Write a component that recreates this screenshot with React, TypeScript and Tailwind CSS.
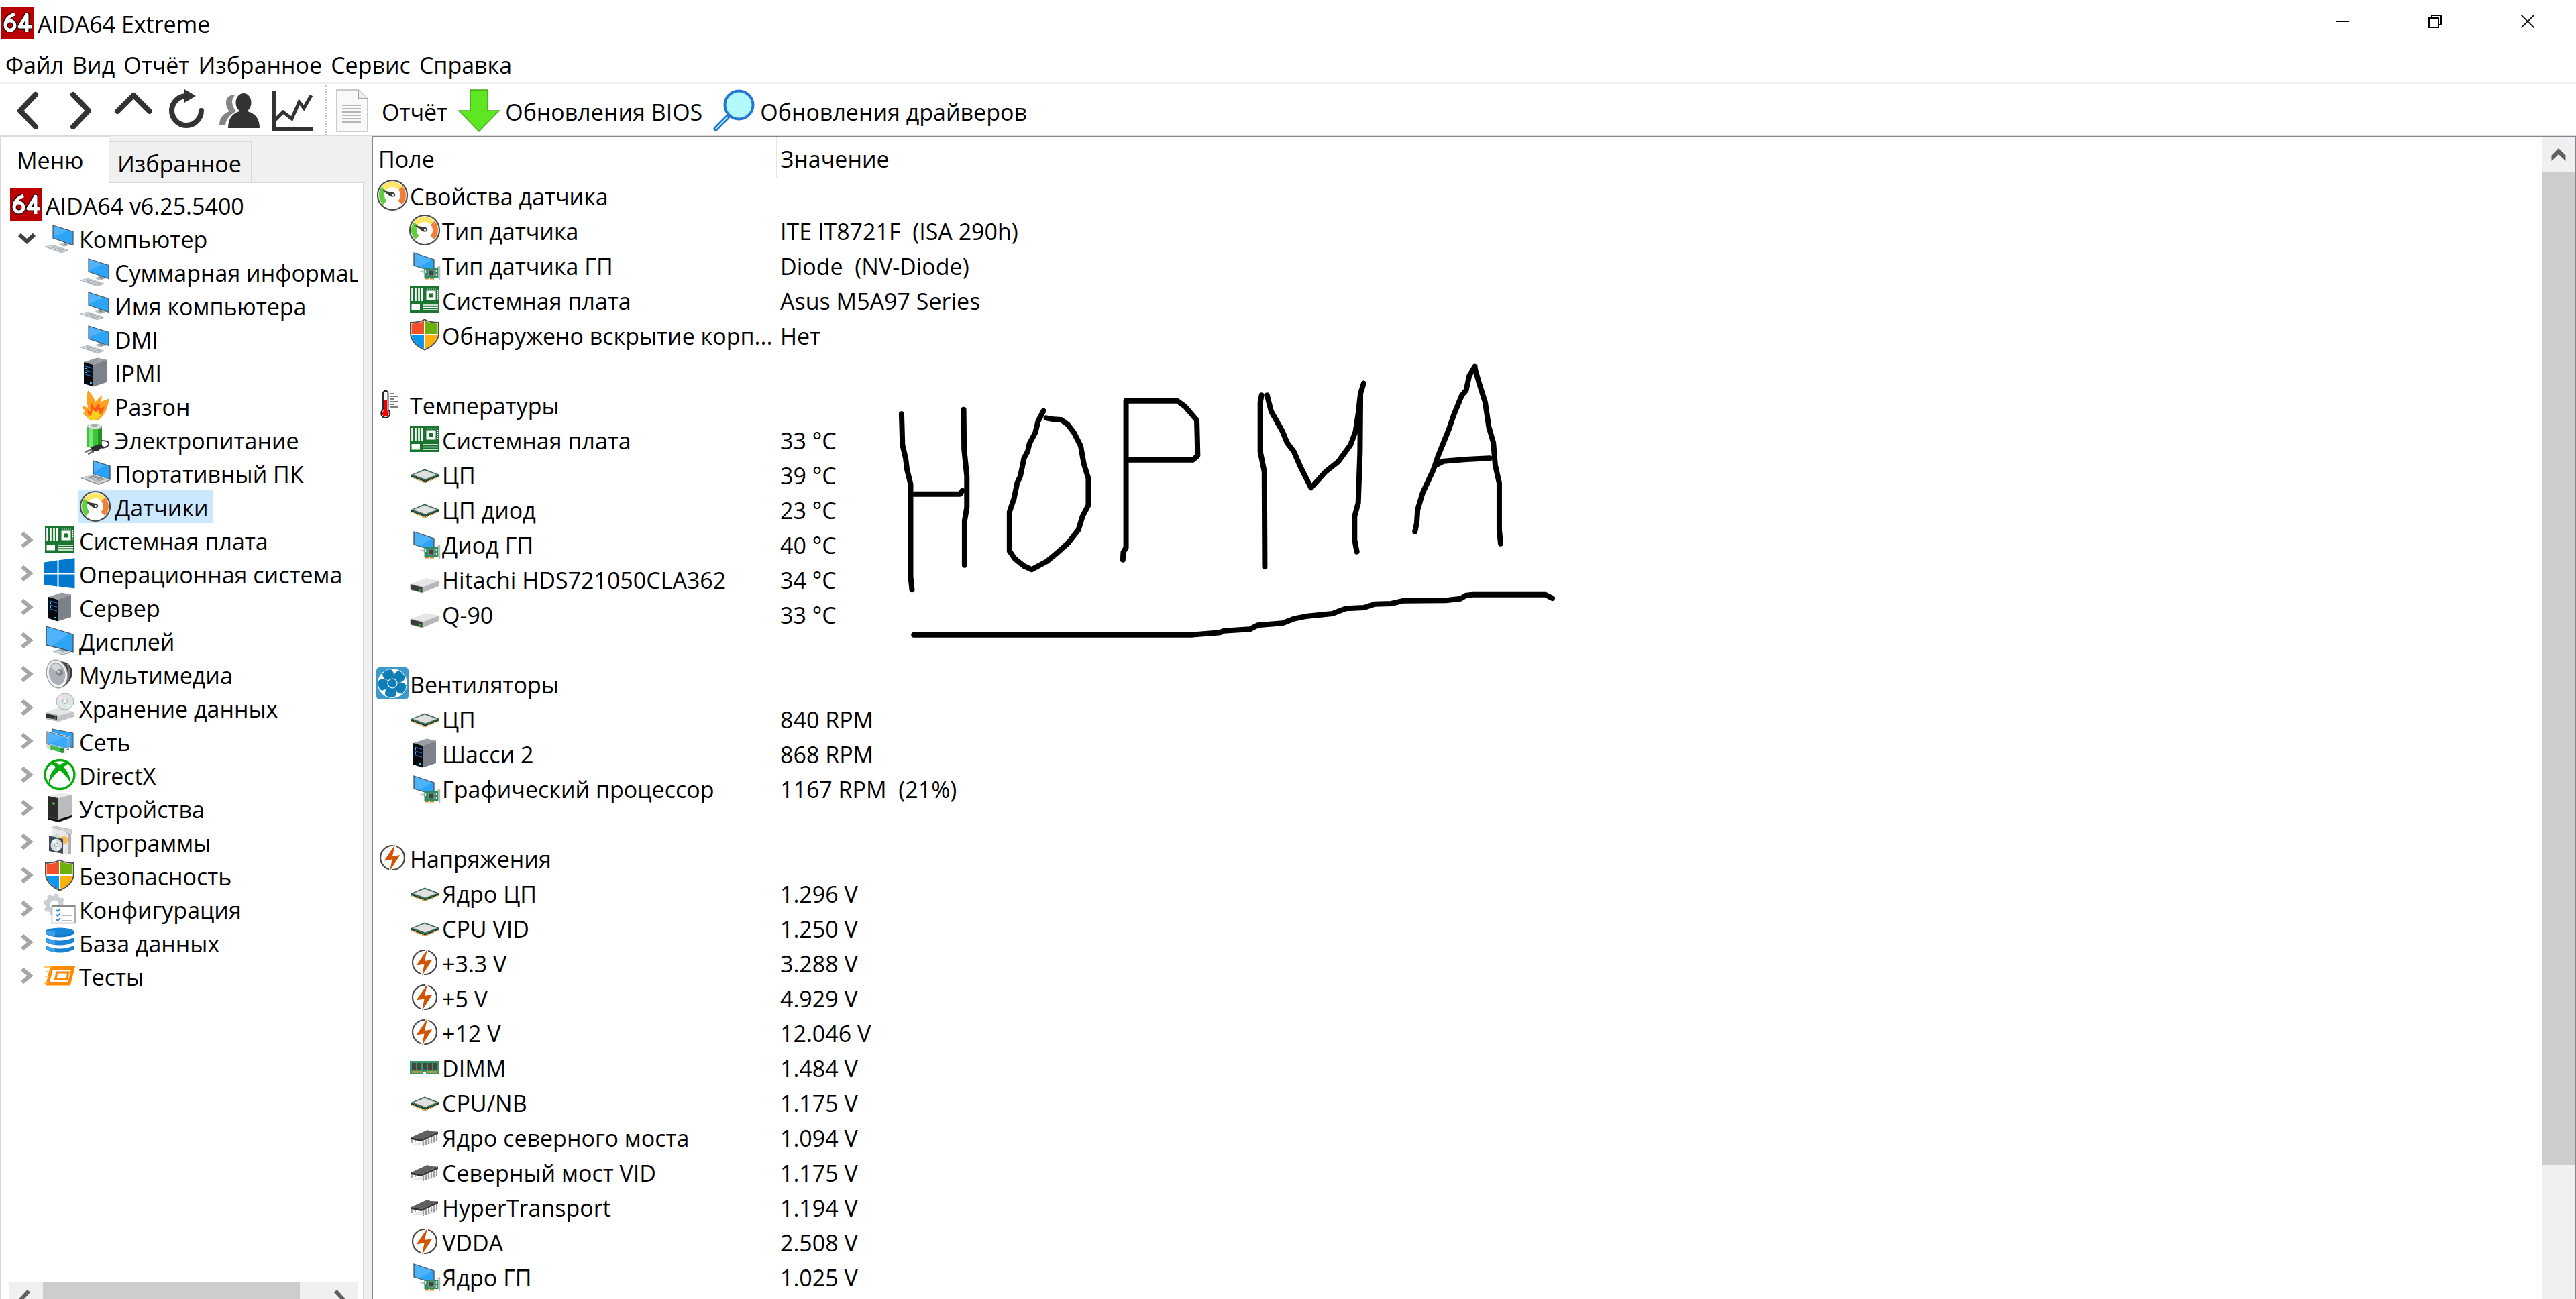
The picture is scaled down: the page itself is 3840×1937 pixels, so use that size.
import React from "react";

type IconName =
  | "aida" | "computer" | "server" | "fire" | "battery" | "laptop" | "gauge" | "board" | "windows"
  | "display" | "speaker" | "storage" | "network" | "xbox" | "tower" | "box" | "shield" | "config"
  | "database" | "tests" | "gpu" | "thermo" | "cpu" | "hdd" | "fan" | "bolt" | "dimm" | "chip";

const icons: Record<IconName, React.ReactNode> = {
  aida: (
    <>
      <rect width="48" height="48" fill="#ba0000" />
      <g fill="none" strokeLinejoin="round" strokeLinecap="butt">
        <g stroke="#1c0000" strokeWidth="7.5">
          <path d="M19 11 Q6 16 6 28 A7 7 0 1 0 13 21 Q8 21 6 27" />
          <path d="M38 37 V12 L27 30 H45" />
        </g>
        <g stroke="#fff" strokeWidth="5">
          <path d="M20 11 Q6 16 6 28 A7 7 0 1 0 13 21 Q8 21 6 27" />
          <path d="M38 38 V12 L27 30 H45" />
        </g>
      </g>
    </>
  ),
  computer: (
    <>
      <path d="M23 33 L34 31 L41 34 L30 37Z" fill="#b9bfc5" />
      <path d="M30 29 L35 30 V35 L30 34Z" fill="#8d959c" />
      <path d="M14 5 L44 14.500 V34.500 L14 24Z" fill="#2ea4f7" stroke="#4a5560" strokeWidth="1.200" />
      <path d="M15 6 L36 13 L15 22Z" fill="#4fb3fa" />
      <path d="M2 37 L13 34 L37 42 L27 46Z" fill="#e3e6e9" stroke="#a7adb2" strokeWidth="0.800" />
      <path d="M6 38 L29 45 M9 36.500 L32 44 M11 35 L35 43 M10 39.500 L19 36.500 M16 41.500 L25 38.500 M22 43.500 L31 40.500" stroke="#9fa6ac" strokeWidth="0.900" />
    </>
  ),
  server: (
    <>
      <path d="M7 9 L27 2.500 L41 5.500 L21 13Z" fill="#9a9ea3" />
      <path d="M21 13 L41 5.500 V39 L21 45.500Z" fill="#7d828a" />
      <path d="M7 9 L21 13 V45.500 L7 41Z" fill="#08090c" />
      <path d="M9 15 L20 18 M9 21 L20 24 M9 27 L20 30" stroke="#1b5fae" strokeWidth="1.300" />
      <path d="M9 18 h2 M9 24 h2 M16 40 h3" stroke="#2fd0ff" strokeWidth="2" />
    </>
  ),
  fire: (
    <>
      <path d="M13 1 Q21 9 24 18 L34 8 L33 18 L45 13 Q42 33 32 43 Q24 48 16 45 L5 35 L9 34 L4 24 L13 27 Q10 12 13 1Z" fill="#ffa21f" />
      <path d="M17 18 L23 28 L30 20 L31 27 L38 26 Q34 37 28 40 L14 38 L12 31 L17 33Z" fill="#ff5a1a" />
      <path d="M20 29 L24 34 L30 30 L29 36 L33 36 Q28 46 18 46 L12 39 L18 39Z" fill="#ffd21a" />
    </>
  ),
  battery: (
    <>
      <path d="M12 5 V35 Q23 40 34 35 V5Z" fill="#3ec63a" />
      <path d="M14 7 V35 Q16 37 20 37 V8Z" fill="#7be67a" />
      <path d="M28 8 V37 L34 35 V6Z" fill="#1f9420" />
      <ellipse cx="23" cy="5" rx="11" ry="3.600" fill="#dfe3df" stroke="#8fa08f" strokeWidth="0.800" />
      <ellipse cx="23" cy="4" rx="4.500" ry="1.800" fill="#a5aaa5" />
      <path d="M33 26 Q46 26 44 32 Q42 36 34 37" fill="none" stroke="#3a3a3a" strokeWidth="2" />
      <path d="M17 36 L30 31 L37 35 L27 42 L19 41Z" fill="#2d2d2d" />
      <path d="M19 39 L9 43 M22 42 L13 46" stroke="#77706a" strokeWidth="2.600" />
    </>
  ),
  laptop: (
    <>
      <path d="M21 6 L46 14 V34 L21 26Z" fill="#27a0f6" stroke="#414b55" strokeWidth="1.300" />
      <path d="M22 7 L39 13 L22 23Z" fill="#4fb3fa" />
      <path d="M3 31 L21 26 L46 34 L29 40Z" fill="#d4d7da" />
      <path d="M9 31 L22 28 L40 33.500 L28 37Z" fill="#8e959b" />
      <path d="M11 31.500 L30 36 M15 30 L34 35" stroke="#dfe2e5" strokeWidth="0.800" />
      <path d="M3 31 L29 40 L46 34 V35.500 L29 42 L3 32.500Z" fill="#8b9196" />
    </>
  ),
  gauge: (
    <>
      <circle cx="24" cy="24" r="22" fill="#fff" stroke="#4b4b4b" strokeWidth="2.200" />
      <g fill="none" strokeWidth="8">
        <path d="M12.700 35.300 A16 16 0 0 1 11 14.500" stroke="#61cf3e" />
        <path d="M11 14.500 A16 16 0 0 1 36 13.500" stroke="#ffe666" />
        <path d="M36 13.500 A16 16 0 0 1 35.300 35.300" stroke="#f08038" />
      </g>
      <path d="M9 17 L25 20 Q29 21 28 25 Q25 28 21 26Z" fill="#3c3c3c" />
      <circle cx="24.500" cy="23.500" r="1.600" fill="#fff" />
    </>
  ),
  board: (
    <>
      <rect x="2" y="4" width="44" height="39" fill="#19752f" />
      <path d="M5.500 7 V26 M10.500 7 V26 M15.500 7 V26 M20 7 V26" stroke="#fff" strokeWidth="2.600" />
      <rect x="26.500" y="10.500" width="14" height="14" fill="#fff" />
      <rect x="30.500" y="14.500" width="6" height="6" fill="#19752f" />
      <path d="M27 8 H41 M43.500 10 V25" stroke="#fff" strokeWidth="1.500" strokeDasharray="1.500 1.500" />
      <rect x="4.500" y="31" width="12.500" height="8.500" fill="#fff" />
      <path d="M21 32 H44 M21 35.500 H44 M21 39 H44" stroke="#fff" strokeWidth="1.500" />
    </>
  ),
  windows: (
    <path fill="#0078cf" d="M1 7.500 L20.500 4.500 V23 H1Z M22.500 4.200 L46.500 1.200 V23 H22.500Z M1 25.500 H20.500 V43.500 L1 41Z M22.500 25.500 H46.500 V46.500 L22.500 43.500Z" />
  ),
  display: (
    <>
      <path d="M14 40 L28 37 L40 42 L28 45Z" fill="#cfd8de" stroke="#7d8f9c" strokeWidth="0.800" />
      <path d="M25 35 L31 36 V42 L25 40Z" fill="#9fb1be" />
      <path d="M4 3 L44 15 V41 L4 31Z" fill="#2ea4f7" stroke="#45515c" strokeWidth="1.300" />
      <path d="M5 4 L38 14 L13 32 L5 30Z" fill="#4fb3fa" />
    </>
  ),
  speaker: (
    <>
      <path d="M24 5 Q42 6 43 22 Q42 36 27 45Z" fill="#3b3d40" />
      <path d="M35 9 Q41 18 36 36" fill="none" stroke="#75787c" strokeWidth="2" />
      <ellipse cx="20" cy="24" rx="15.500" ry="21" fill="#f1f1f1" stroke="#9a9a9a" strokeWidth="1.200" transform="rotate(-12 20 24)" />
      <ellipse cx="20" cy="23.500" rx="12" ry="17" fill="#aab0b5" transform="rotate(-12 20 23.500)" />
      <path d="M10 13 Q20 3 27 16 L23 24Z" fill="#d3d8dc" />
      <circle cx="24" cy="22" r="5" fill="#7f868d" />
      <circle cx="22.500" cy="20.500" r="2.200" fill="#b8d0e2" />
    </>
  ),
  storage: (
    <>
      <path d="M3 31 L22 24 L45 30 L22 36Z" fill="#e4e6e8" />
      <path d="M3 31 L22 35 V45 L3 41Z" fill="#b4b6b8" />
      <path d="M4 33 L20 36.500 V42 L4 39Z" fill="#2e3032" />
      <path d="M22 36 L45 30 V38 L22 45Z" fill="#c3c5c8" />
      <path d="M15 39.500 h3" stroke="#28d528" strokeWidth="2" />
      <ellipse cx="32" cy="15" rx="13" ry="12" fill="#dfe5e4" stroke="#a9aeae" strokeWidth="1" />
      <path d="M32 15 L22 8 A13 12 0 0 1 28 4Z" fill="#f7dff3" />
      <path d="M32 15 L41 23 A13 12 0 0 1 35 26Z" fill="#d9f3df" />
      <circle cx="32" cy="15" r="3.500" fill="#fff" stroke="#9da2a2" />
    </>
  ),
  network: (
    <>
      <path d="M13 6 L44 12 V34 L13 26Z" fill="#2ea4f7" stroke="#4a5560" strokeWidth="1" />
      <path d="M5 10 L37 18 V37 L5 29Z" fill="#37a9f8" stroke="#dfe7ee" strokeWidth="2.500" />
      <path d="M5 10 L37 18 V37 L5 29Z" fill="none" stroke="#4a5560" strokeWidth="1" />
      <path d="M6 11 L33 18 L6 28Z" fill="#4fb3fa" />
      <path d="M4 32 L34 39" stroke="#d9dedb" strokeWidth="6" />
      <path d="M10 33.500 L25 37.500" stroke="#45bf52" strokeWidth="6" />
      <ellipse cx="28" cy="38" rx="3.500" ry="4" fill="#2f8f3a" />
      <path d="M31 38 h4" stroke="#eceeed" strokeWidth="6" />
    </>
  ),
  xbox: (
    <>
      <ellipse cx="24" cy="24" rx="22" ry="21.500" fill="none" stroke="#00ad0b" strokeWidth="3.400" />
      <path d="M10 6.500 Q16 4.500 24 9 Q32 4.500 38 6.500 Q35 8.500 30 12.500 Q41 25 40.500 39 Q38 29 24 17.500 Q10 29 7.500 39 Q7 25 18 12.500 Q13 8.500 10 6.500Z" fill="#00ad0b" />
    </>
  ),
  tower: (
    <>
      <path d="M7 6 L26 1 L42 4 L22 9Z" fill="#e9eaec" />
      <path d="M22 9 L42 4 V36 L22 41Z" fill="#b9bbbd" />
      <path d="M7 6 L22 9 V41 L7 38Z" fill="#2b2b2c" />
      <path d="M7 38 L22 41 L42 35 V38 L22 45 L7 41Z" fill="#131313" />
      <circle cx="15" cy="17" r="1.800" fill="#38e038" />
    </>
  ),
  box: (
    <>
      <path d="M13 4 L40 8 V42 L34 44 L13 38Z" fill="#e8e9ea" />
      <path d="M36 10 L41 9 V42 L36 43Z" fill="#aeb0b2" />
      <path d="M12 3 L17 1 L42 6 V13 L34 11 L34 8Z" fill="#d0d2d4" stroke="#a4a7a9" strokeWidth="0.700" />
      <circle cx="30" cy="22" r="6.500" fill="#f9b95c" />
      <path d="M12 18 L20 11 L26 20Z" fill="#c6dfc9" />
      <path d="M8 15 L29 20 V42 L8 38Z" fill="#3f4c5a" />
      <ellipse cx="19" cy="29" rx="8.500" ry="9.500" fill="#d8dcde" />
      <path d="M19 29 L12 24 L17 20Z M19 29 L25 36 L20 38Z" fill="#f4f6f7" />
      <circle cx="19" cy="29" r="2.400" fill="#fff" stroke="#848b91" />
    </>
  ),
  shield: (
    <>
      <path d="M3 6 Q16 6 24 1.500 Q32 6 45 6 V22 Q44 38 24 46.500 Q4 38 3 22Z" fill="#fff" stroke="#4d4d4d" strokeWidth="2" />
      <path d="M4.500 7.500 Q16 7 23 3.500 V23 H4.500Z" fill="#f2502a" />
      <path d="M43.500 7.500 Q32 7 25 3.500 V23 H43.500Z" fill="#6cb009" />
      <path d="M4.500 25 H23 V45 Q6 37 4.500 25Z" fill="#0a98ee" />
      <path d="M43.500 25 H25 V45 Q42 37 43.500 25Z" fill="#fdb109" />
    </>
  ),
  config: (
    <>
      <circle cx="16" cy="18" r="10" fill="none" stroke="#c9ced2" strokeWidth="7" />
      <circle cx="16" cy="18" r="14.500" fill="none" stroke="#c9ced2" strokeWidth="4" strokeDasharray="6 5.380" />
      <rect x="12.500" y="19.500" width="34.500" height="26" fill="#fff" stroke="#8a8a8a" strokeWidth="1.400" />
      <path d="M13 21 H46" stroke="#8a8a8a" strokeWidth="2.200" />
      <path d="M19 26 l2 2 l4 -4 M19 33 l2 2 l4 -4 M19 40 l2 2 l4 -4" fill="none" stroke="#2a8ad8" strokeWidth="1.800" />
      <path d="M27 27.500 H42 M27 34.500 H42 M27 41.500 H42" stroke="#bcbcbc" strokeWidth="1" />
    </>
  ),
  database: (
    <>
      <path d="M3 8 V12 Q24 21 45 12 V8Z" fill="#0f77c4" />
      <ellipse cx="24" cy="8" rx="21" ry="5.500" fill="#1686d6" />
      <path d="M3 17 Q24 26 45 17 V24 Q24 33 3 24Z" fill="#1a84d2" />
      <path d="M3 29 Q24 38 45 29 V35 Q24 44 3 35Z" fill="#1a84d2" />
      <path d="M3 8 V12 Q10 15 17 15.500 V8Z M3 17 Q10 20 17 21 V28 Q10 27 3 24Z M3 29 Q10 32 17 33 V39 Q10 38 3 35Z" fill="#3f9fe6" />
    </>
  ),
  tests: (
    <>
      <path d="M12 12.500 H44 L38 36 H6 Z" fill="none" stroke="#ff8a00" strokeWidth="4.800" />
      <path d="M20 19 H37 L34.500 29.500 H17.500Z" fill="none" stroke="#ff8a00" strokeWidth="3.200" />
      <path d="M1 11 H12 M4 18 H11 M2 25 H9 M0 35.500 H8" stroke="#ffb04d" strokeWidth="1.400" />
    </>
  ),
  gpu: (
    <>
      <path d="M16 33 L25 32 V37Z" fill="#bcc2c7" />
      <path d="M8 6 L38 16 V34 L8 25Z" fill="#2ea4f7" stroke="#45515c" strokeWidth="1.300" />
      <path d="M9 7 L35 16 L16 27 L9 24Z" fill="#4fb3fa" />
      <rect x="23.500" y="29" width="21" height="14" fill="#2e8b62" />
      <rect x="30" y="32" width="8" height="8" fill="#3f4240" stroke="#a9b9b0" strokeWidth="0.800" />
      <path d="M25.500 31 v5 M41.500 31 v4 M41.500 37 v4" stroke="#d8e5dd" strokeWidth="1.600" />
      <path d="M24 44.300 H31 M32 44.300 H38" stroke="#cf8a2a" strokeWidth="2.600" />
      <path d="M43 28 L46.500 26 V46" fill="none" stroke="#b6b9bb" strokeWidth="1.500" />
    </>
  ),
  thermo: (
    <>
      <path d="M10 7.500 A3.700 3.700 0 0 1 17.500 7.500 V32 A6.600 6.600 0 1 1 10 32Z" fill="#fff" stroke="#151515" strokeWidth="1.800" />
      <path d="M11.500 18 H16 V33 A5 5 0 1 1 11.500 33Z" fill="#f20000" />
      <path d="M20 8 H27 M20 12 H32 M20 16 H27 M20 20 H32 M20 24 H27 M20 28 H32" stroke="#555" strokeWidth="1.500" />
    </>
  ),
  cpu: (
    <>
      <path d="M4 27.500 L24.500 36 L45 27" fill="none" stroke="#c99a35" strokeWidth="3.200" strokeDasharray="1.700 0.800" />
      <path d="M2.500 25.500 L24 16.500 L46.500 25 L25 33.500Z" fill="#28604a" />
      <path d="M3 25.500 L25 33.500 L46 25 V27 L25 35.500 L3 27.500Z" fill="#183a2d" />
      <path d="M7 25 L24 18.500 L42 25 L25 31.500Z" fill="#e0e0de" stroke="#a7aca9" strokeWidth="0.800" />
    </>
  ),
  hdd: (
    <>
      <path d="M3 32 L26 23 L45 27 L21 36.500Z" fill="#e5e6e8" />
      <path d="M21 36.500 L45 27 V35 L21 45Z" fill="#b5b7ba" />
      <path d="M3 32 L21 36.500 V45 L3 40.500Z" fill="#3a3b3d" stroke="#a2a4a6" strokeWidth="1" />
      <path d="M16 40.500 h2.500" stroke="#26d326" strokeWidth="2" />
    </>
  ),
  fan: (
    <>
      <rect width="48" height="48" rx="5" fill="#3b9aca" />
      <circle cx="24" cy="24" r="22" fill="#fff" />
      {[-25, 47, 119, 191, 263].map((a) => (
        <g key={a} transform={`rotate(${a} 24 24)`}>
          <path d="M30 4 Q36 10 29 19 H26 Q30 10 30 4Z" fill="#b9c9d2" />
          <path d="M19.500 19 Q13 9 17 4.500 Q24 1 31 4.500 Q34 11 28 19Z" fill="#0f7eb6" />
        </g>
      ))}
      <circle cx="24" cy="24" r="7" fill="#0f7eb6" stroke="#fff" strokeWidth="1.200" />
    </>
  ),
  bolt: (
    <>
      <circle cx="24" cy="24" r="18" fill="none" stroke="#474747" strokeWidth="2.200" />
      <path d="M30 0 L10 29.500 L22.500 27.500 L18.500 48 L37 19 L25 21Z" fill="#d25400" stroke="#fff" strokeWidth="1.600" />
    </>
  ),
  dimm: (
    <>
      <path d="M2 15 H46 V34 H26 V31 H22 V34 H2Z" fill="#38976c" />
      <path d="M3 16.500 H45" stroke="#a6d6bf" strokeWidth="1.200" strokeDasharray="1.500 2.500" />
      <path d="M5 18 h6 v11 h-6Z M13 18 h6 v11 h-6Z M21 18 h6 v11 h-6Z M29 18 h6 v11 h-6Z M37 18 h6 v11 h-6Z" fill="#45443f" />
      <path d="M5 31.500 H20 M28 31.500 H43" stroke="#db9637" strokeWidth="2.600" />
    </>
  ),
  chip: (
    <>
      <path d="M6 36 L22 30 L44 26 L40 34 L24 36Z" fill="#e5e5e5" />
      <path d="M4 25 L28 14 L33 16 L44 16.500 L19 28Z" fill="#606060" />
      <path d="M4 25 L19 28 V31 L4 28Z" fill="#2e2e2e" />
      <path d="M19 28 L44 16.500 V20 L19 31Z" fill="#3b3b3b" />
      <path d="M5 28 V34 M10 29 V32 M22 30 V38 M26 28 V37 M30 26.500 V35 M34 25 V33 M38 23 V32 M42 21 V30" stroke="#858585" strokeWidth="1.500" />
    </>
  ),
};

function Icon({ name }: { name: IconName }) {
  return (
    <svg viewBox="0 0 48 48" className="size-12 shrink-0" aria-hidden="true">
      {icons[name]}
    </svg>
  );
}

type Node = { icon: IconName; label: string; level: 0 | 1 | 2; open?: boolean; selected?: boolean };

const tree: Node[] = [
  { icon: "aida", label: "AIDA64 v6.25.5400", level: 0 },
  { icon: "computer", label: "Компьютер", level: 1, open: true },
  { icon: "computer", label: "Суммарная информация", level: 2 },
  { icon: "computer", label: "Имя компьютера", level: 2 },
  { icon: "computer", label: "DMI", level: 2 },
  { icon: "server", label: "IPMI", level: 2 },
  { icon: "fire", label: "Разгон", level: 2 },
  { icon: "battery", label: "Электропитание", level: 2 },
  { icon: "laptop", label: "Портативный ПК", level: 2 },
  { icon: "gauge", label: "Датчики", level: 2, selected: true },
  { icon: "board", label: "Системная плата", level: 1 },
  { icon: "windows", label: "Операционная система", level: 1 },
  { icon: "server", label: "Сервер", level: 1 },
  { icon: "display", label: "Дисплей", level: 1 },
  { icon: "speaker", label: "Мультимедиа", level: 1 },
  { icon: "storage", label: "Хранение данных", level: 1 },
  { icon: "network", label: "Сеть", level: 1 },
  { icon: "xbox", label: "DirectX", level: 1 },
  { icon: "tower", label: "Устройства", level: 1 },
  { icon: "box", label: "Программы", level: 1 },
  { icon: "shield", label: "Безопасность", level: 1 },
  { icon: "config", label: "Конфигурация", level: 1 },
  { icon: "database", label: "База данных", level: 1 },
  { icon: "tests", label: "Тесты", level: 1 },
];

type Row = { icon: IconName; label: string; value?: string } | null;

const rows: Row[] = [
  { icon: "gauge", label: "Свойства датчика" },
  { icon: "gauge", label: "Тип датчика", value: "ITE IT8721F  (ISA 290h)" },
  { icon: "gpu", label: "Тип датчика ГП", value: "Diode  (NV-Diode)" },
  { icon: "board", label: "Системная плата", value: "Asus M5A97 Series" },
  { icon: "shield", label: "Обнаружено вскрытие корп...", value: "Нет" },
  null,
  { icon: "thermo", label: "Температуры" },
  { icon: "board", label: "Системная плата", value: "33 °C" },
  { icon: "cpu", label: "ЦП", value: "39 °C" },
  { icon: "cpu", label: "ЦП диод", value: "23 °C" },
  { icon: "gpu", label: "Диод ГП", value: "40 °C" },
  { icon: "hdd", label: "Hitachi HDS721050CLA362", value: "34 °C" },
  { icon: "hdd", label: "Q-90", value: "33 °C" },
  null,
  { icon: "fan", label: "Вентиляторы" },
  { icon: "cpu", label: "ЦП", value: "840 RPM" },
  { icon: "server", label: "Шасси 2", value: "868 RPM" },
  { icon: "gpu", label: "Графический процессор", value: "1167 RPM  (21%)" },
  null,
  { icon: "bolt", label: "Напряжения" },
  { icon: "cpu", label: "Ядро ЦП", value: "1.296 V" },
  { icon: "cpu", label: "CPU VID", value: "1.250 V" },
  { icon: "bolt", label: "+3.3 V", value: "3.288 V" },
  { icon: "bolt", label: "+5 V", value: "4.929 V" },
  { icon: "bolt", label: "+12 V", value: "12.046 V" },
  { icon: "dimm", label: "DIMM", value: "1.484 V" },
  { icon: "cpu", label: "CPU/NB", value: "1.175 V" },
  { icon: "chip", label: "Ядро северного моста", value: "1.094 V" },
  { icon: "chip", label: "Северный мост VID", value: "1.175 V" },
  { icon: "chip", label: "HyperTransport", value: "1.194 V" },
  { icon: "bolt", label: "VDDA", value: "2.508 V" },
  { icon: "gpu", label: "Ядро ГП", value: "1.025 V" },
];

function Chevron({ open }: { open?: boolean }) {
  return (
    <svg viewBox="0 0 30 30" className="size-[30px]" aria-hidden="true">
      {open ? (
        <path d="M4 10 L15 20 L26 10" fill="none" stroke="#404040" strokeWidth="6" />
      ) : (
        <path d="M8 5 L20 15 L8 25" fill="none" stroke="#a6a6a6" strokeWidth="6" />
      )}
    </svg>
  );
}

const indents = ["pl-3", "pl-6", "pl-[115px]"];

function TreeRow({ node }: { node: Node }) {
  return (
    <li className={`flex h-[50px] items-center ${indents[node.level]}`}>
      {node.level === 1 && (
        <button type="button" aria-label={node.label} aria-expanded={!!node.open} className="mr-2 shrink-0">
          <Chevron open={node.open} />
        </button>
      )}
      <a
        href="#"
        className={`flex h-[50px] shrink-0 items-center gap-[5px] whitespace-nowrap pl-0.5 pr-1.5 ${node.selected ? "bg-[#cce8ff]" : ""}`}
      >
        <Icon name={node.icon} />
        <span className="pt-1">{node.label}</span>
      </a>
    </li>
  );
}

const toolGlyphs: { label: string; art: React.ReactNode }[] = [
  { label: "Назад", art: <path d="M44 8 L21 32 L44 56" fill="none" stroke="#333" strokeWidth="8" strokeLinecap="round" strokeLinejoin="round" /> },
  { label: "Вперёд", art: <path d="M21 8 L44 32 L21 56" fill="none" stroke="#333" strokeWidth="8" strokeLinecap="round" strokeLinejoin="round" /> },
  { label: "Вверх", art: <path d="M8 33 L32 9 L56 33" fill="none" stroke="#333" strokeWidth="8" strokeLinecap="round" strokeLinejoin="round" /> },
  {
    label: "Обновить",
    art: (
      <>
        <path d="M33 10 A22 22 0 1 0 54 32" fill="none" stroke="#333" strokeWidth="8" strokeLinecap="round" />
        <path d="M29 0 L46 10 L29 20Z" fill="#333" />
      </>
    ),
  },
  {
    label: "Пользователи",
    art: (
      <>
        <path d="M26 8 Q11 8 12 22 Q13 29 17 33 Q2 38 2 54 H11 Q12 41 27 33 Q21 26 21 18 Q22 11 26 8Z" fill="#858585" />
        <ellipse cx="38" cy="20" rx="11.500" ry="14" fill="#333" />
        <path d="M32 28 H44 V33 Q62 38 62 58 H15 Q15 38 32 33Z" fill="#333" />
      </>
    ),
  },
  {
    label: "График",
    art: (
      <>
        <path d="M5 2 V59 H62" fill="none" stroke="#333" strokeWidth="6" />
        <path d="M6 46 L18 34 L31 44 L42 19 L49 28 L60 9" fill="none" stroke="#333" strokeWidth="5" />
      </>
    ),
  },
];

function Toolbar() {
  return (
    <div role="toolbar" className="flex h-[78px] items-center border-b border-[#d9d9d9] pl-px pt-0.5">
      {toolGlyphs.map((g) => (
        <button key={g.label} type="button" aria-label={g.label} className="flex h-full w-[79px] items-center justify-center">
          <svg viewBox="0 0 64 64" className="size-16" aria-hidden="true">
            {g.art}
          </svg>
        </button>
      ))}
      <span className="ml-2.5 h-full w-0 border-l-2 border-dotted border-[#c4c4c4]" />
      <button type="button" className="ml-1.5 flex items-center gap-3">
        <svg viewBox="0 0 64 64" className="size-16" aria-hidden="true">
          <path d="M9 1 H41 L55 14 V63 H9Z" fill="#f8f9f9" stroke="#b9bbbb" strokeWidth="1.500" />
          <path d="M41 1 V14 H55" fill="#ececec" stroke="#8f8f8f" strokeWidth="1.500" />
          <path d="M17 24 H45 M17 29 H45 M17 34 H45 M17 39 H45 M17 44 H45 M17 49 H45" stroke="#777" strokeWidth="1.200" />
        </svg>
        <span className="pt-1">Отчёт</span>
      </button>
      <button type="button" className="ml-[15px] flex items-center gap-[7px]">
        <svg viewBox="0 0 64 64" className="size-16" aria-hidden="true">
          <path d="M19 1 H45 V32 H62 L32 63 L2 32 H19Z" fill="#5de622" stroke="#45a81b" strokeWidth="1.500" />
        </svg>
        <span className="pt-1">Обновления BIOS</span>
      </button>
      <button type="button" className="ml-[15px] flex items-center gap-[7px]">
        <svg viewBox="0 0 64 64" className="size-16" aria-hidden="true">
          <path d="M23 41 L5 59" stroke="#2477d0" strokeWidth="7" strokeLinecap="round" />
          <path d="M22 42 L5 59" stroke="#a7eefb" strokeWidth="2" strokeLinecap="round" />
          <circle cx="39.500" cy="23.500" r="21" fill="#b3faff" stroke="#2477d0" strokeWidth="4" />
        </svg>
        <span className="pt-1">Обновления драйверов</span>
      </button>
    </div>
  );
}

function WindowControls() {
  return (
    <div className="ml-auto flex h-16 pr-[3px]">
      <button type="button" aria-label="Свернуть" className="flex w-[138px] items-center justify-center">
        <svg viewBox="0 0 20 20" className="size-5"><path d="M0 10 H20" stroke="#000" strokeWidth="2" /></svg>
      </button>
      <button type="button" aria-label="Восстановить" className="flex w-[138px] items-center justify-center">
        <svg viewBox="0 0 20 20" className="size-5">
          <path d="M1 5 H15 V19 H1Z M5 5 V1 H19 V15 H15" fill="none" stroke="#000" strokeWidth="2" />
        </svg>
      </button>
      <button type="button" aria-label="Закрыть" className="flex w-[138px] items-center justify-center">
        <svg viewBox="0 0 20 20" className="size-5"><path d="M0.500 0.500 L19.500 19.500 M19.500 0.500 L0.500 19.500" stroke="#000" strokeWidth="1.600" /></svg>
      </button>
    </div>
  );
}

function Sidebar() {
  return (
    <aside className="flex w-[555px] shrink-0 flex-col bg-[#f0f0f0] pr-[13px]">
      <div role="tablist" className="flex items-end">
        <button role="tab" type="button" aria-selected="true" className="flex h-[70px] w-[162px] items-center border-l border-t border-[#d9d9d9] bg-white pl-6">
          Меню
        </button>
        <button role="tab" type="button" aria-selected="false" className="flex h-[63px] w-[213px] items-center border border-[#d9d9d9] pl-3 pt-1">
          Избранное
        </button>
        <span className="h-px grow bg-[#d9d9d9]" />
      </div>
      <div className="flex min-h-0 grow flex-col border-x border-[#d9d9d9] bg-white pr-2 pt-[7px]">
        <ul className="min-h-0 grow overflow-hidden">
          {tree.map((n, i) => (
            <TreeRow key={i} node={n} />
          ))}
        </ul>
        <div className="ml-3 flex h-[25px] shrink-0 items-start overflow-hidden bg-[#f0f0f0]">
          <button type="button" aria-label="Прокрутить влево" className="w-[51px] shrink-0 pl-3 pt-3">
            <svg viewBox="0 0 24 30" className="h-[30px] w-6"><path d="M18 1 L4 16 L18 31" fill="none" stroke="#606060" strokeWidth="6" /></svg>
          </button>
          <div className="h-full w-[383px] bg-[#cdcdcd]" />
          <button type="button" aria-label="Прокрутить вправо" className="ml-auto w-[51px] pl-3 pt-3">
            <svg viewBox="0 0 24 30" className="h-[30px] w-6"><path d="M6 1 L20 16 L6 31" fill="none" stroke="#606060" strokeWidth="6" /></svg>
          </button>
        </div>
      </div>
    </aside>
  );
}

function Scribble() {
  return (
    <svg
      viewBox="0 0 1568 1440"
      preserveAspectRatio="none"
      className="pointer-events-none absolute left-[744px] top-[296px] h-[480px] w-[1060px]"
      aria-label="НОРМА"
    >
      <g fill="none" stroke="#000" strokeLinecap="round" strokeLinejoin="round">
        {[
          "M65 352 L67 490 L74 550 L77 600 L85 665 L85 1080 L88 1138",
          "M202 332 L203 510 L209 630 L209 770 L204 830 L204 1028",
          "M92 710 L194 710 L199 695",
          "M378 338 L366 385 L360 435 L347 485 L343 520 L335 550 L327 630 L320 660 L313 730 L303 790 L303 965 L315 1000 L335 1032 L352 1048 L385 1012 L410 970 L432 930 L455 870 L464 810 L477 760 L477 640 L467 575 L460 495 L445 435 L432 400 L417 378 L400 376 L384 370",
          "M553 1004 L554 970 L560 950 L560 293 L673 293 L690 318 L716 380 L718 538 L708 557 L562 557",
          "M859 268 L856 300 L856 520 L865 610 L866 1036",
          "M871 268 L880 340 L905 430 L915 480 L930 520 L945 590 L955 630 L968 682 L1000 610 L1028 565 L1055 490 L1066 430 L1072 350 L1077 260 L1084 215",
          "M1077 262 L1076 520 L1072 750 L1064 810 L1064 915 L1069 968",
          "M1329 140 L1317 180 L1310 245 L1300 270 L1282 360 L1272 420 L1248 540 L1238 600 L1214 705 L1203 780 L1201 840 L1197 878",
          "M1329 145 L1338 210 L1352 300 L1360 410 L1370 480 L1374 580 L1383 660 L1383 870 L1386 932",
          "M1244 580 L1260 563 L1310 555 L1362 550",
          "M92 1340 L705 1340 L768 1330 L775 1322 L833 1315 L850 1297 L905 1288 L930 1268 L960 1256 L1015 1245 L1045 1222 L1085 1218 L1108 1202 L1145 1200 L1172 1187 L1265 1186 L1298 1178 L1310 1163 L1325 1160 L1485 1160 L1500 1176",
        ].map((d) => (
          <path key={d} d={d} vectorEffect="non-scaling-stroke" strokeWidth="8" />
        ))}
      </g>
    </svg>
  );
}

function Details() {
  return (
    <main className="relative flex min-w-0 grow overflow-hidden border-l border-r border-t border-[#828790] bg-white">
      <div className="min-w-0 grow overflow-hidden">
        <table className="w-full table-fixed border-collapse text-left">
          <colgroup>
            <col className="w-[601px]" />
            <col className="w-[1116px]" />
            <col />
          </colgroup>
          <thead>
            <tr className="h-[61px]">
              <th className="border-r border-[#e5e5e5] p-0 pl-2 pt-1 font-normal">Поле</th>
              <th className="border-r border-[#e5e5e5] p-0 pl-1.5 pt-1 font-normal">Значение</th>
              <th className="p-0" aria-label="Прочее" />
            </tr>
          </thead>
          <tbody>
            {rows.map((r, i) => (
              <tr key={i} className="h-[52px]">
                {r && (
                  <>
                    <td className={`p-0 ${r.value ? "pl-[53px]" : "pl-[5px]"}`}>
                      <span className="flex items-center gap-0.5 whitespace-nowrap">
                        <Icon name={r.icon} />
                        <span className="pt-1">{r.label}</span>
                      </span>
                    </td>
                    <td className="whitespace-pre p-0 pl-1.5 pt-1">{r.value}</td>
                  </>
                )}
              </tr>
            ))}
          </tbody>
        </table>
      </div>
      <div className="mt-px flex w-[50px] shrink-0 flex-col bg-[#f0f0f0]">
        <button type="button" aria-label="Прокрутить вверх" className="flex h-[51px] items-center justify-center">
          <svg viewBox="0 0 22 20" className="h-5 w-[22px]"><path d="M0.500 19 V10.500 L11 0 L21.500 10.500 V19 L11 9Z" fill="#606060" /></svg>
        </button>
        <div className="mr-px h-[85.500%] grow-0 bg-[#cdcdcd]" />
      </div>
      <Scribble />
    </main>
  );
}

export default function App() {
  return (
    <div className="flex h-screen flex-col overflow-hidden bg-white font-['Open_Sans','Noto_Sans',sans-serif] text-[34px] leading-[46px] text-black">
      <header className="flex h-[68px] items-center pl-0.5">
        <Icon name="aida" />
        <h1 className="ml-1.5 pt-1">AIDA64 Extreme</h1>
        <div className="flex grow self-start">
          <WindowControls />
        </div>
      </header>
      <nav className="flex h-[57px] items-center gap-[13px] border-b-2 border-[#f0f0f0] pl-2 pt-0.5">
        {["Файл", "Вид", "Отчёт", "Избранное", "Сервис", "Справка"].map((m) => (
          <button key={m} type="button">{m}</button>
        ))}
      </nav>
      <Toolbar />
      <div className="flex min-h-0 grow">
        <Sidebar />
        <Details />
      </div>
    </div>
  );
}
